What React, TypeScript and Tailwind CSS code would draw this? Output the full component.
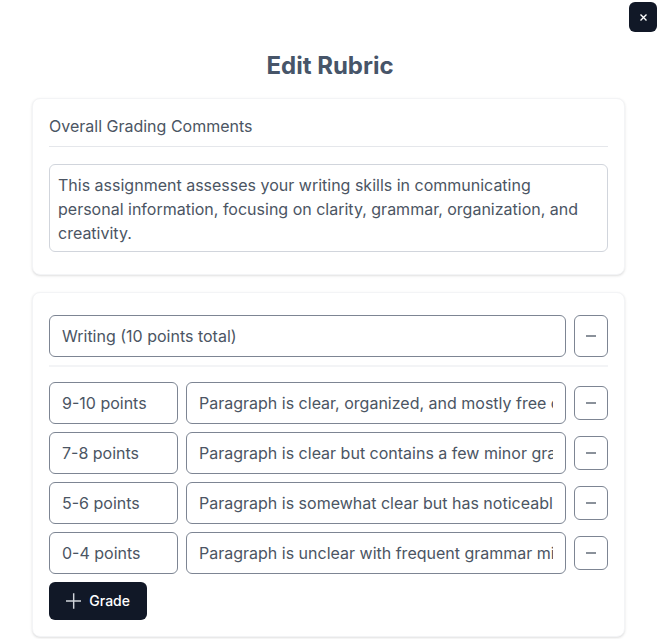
import React from "react";

const rows = [
  { points: "9-10 points", text: "Paragraph is clear, organized, and mostly free of grammar and spelling errors." },
  { points: "7-8 points", text: "Paragraph is clear but contains a few minor grammar or spelling errors." },
  { points: "5-6 points", text: "Paragraph is somewhat clear but has noticeable grammar or spelling errors." },
  { points: "0-4 points", text: "Paragraph is unclear with frequent grammar mistakes." },
];

function MinusButton({ tall }: { tall?: boolean }) {
  return (
    <button
      className={`flex w-[34px] shrink-0 items-center justify-center rounded-md border border-[#7d8593] bg-white ${
        tall ? "h-[42px]" : "h-[34px]"
      }`}
    >
      <svg width="10" height="2" viewBox="0 0 10 2" aria-hidden="true">
        <line x1="0" y1="1" x2="10" y2="1" stroke="#4b5563" strokeWidth="1.3" />
      </svg>
    </button>
  );
}

export default function App() {
  return (
    <div
      className="relative h-[639px] w-[660px] overflow-hidden bg-white text-[#4b5563]"
      style={{ fontFamily: "Inter, 'Noto Sans', sans-serif" }}
    >
      <button className="absolute right-[3px] top-[2px] flex h-[30px] w-7 items-center justify-center rounded-md bg-[#111827]">
        <svg width="7" height="7" viewBox="0 0 7 7" aria-hidden="true">
          <path d="M0.5 0.5L6.5 6.5M6.5 0.5L0.5 6.5" stroke="white" strokeWidth="1.4" />
        </svg>
      </button>

      <h1 className="pt-[50px] text-center text-2xl font-bold leading-8 text-[#475569]">Edit Rubric</h1>

      <div className="ml-[32px] mt-4 w-[593px]">
        <div className="rounded-lg border border-gray-100 bg-white px-4 pb-[22px] pt-[15px] shadow-sm">
          <p className="text-base leading-6 text-[#4b5563]">Overall Grading Comments</p>
          <div className="mt-2 h-px bg-gray-200" />
          <textarea
            className="mt-[17px] block h-[88px] w-full resize-none rounded-md border border-gray-300 px-2 py-2 text-base leading-6 text-[#4b5563] outline-none"
            defaultValue="This assignment assesses your writing skills in communicating personal information, focusing on clarity, grammar, organization, and creativity."
          />
        </div>

        <div className="mt-[17px] rounded-lg border border-gray-100 bg-white px-4 pb-4 pt-[22px] shadow-sm">
          <div className="flex gap-2">
            <input
              className="h-[42px] min-w-0 flex-1 rounded-md border border-[#7d8593] px-3 text-base text-[#4b5563] outline-none"
              defaultValue="Writing (10 points total)"
            />
            <MinusButton tall />
          </div>
          <div className="mt-2 h-[2px] bg-gray-100" />

          <div className="mt-[15px] flex flex-col gap-2">
            {rows.map((row) => (
              <div key={row.points} className="flex items-center gap-2">
                <input
                  className="h-[42px] w-[129px] shrink-0 rounded-md border border-[#7d8593] px-3 text-base text-[#4b5563] outline-none"
                  defaultValue={row.points}
                />
                <input
                  className="h-[42px] min-w-0 flex-1 rounded-md border border-[#7d8593] px-3 text-base text-[#4b5563] outline-none"
                  defaultValue={row.text}
                />
                <MinusButton />
              </div>
            ))}
          </div>

          <button className="mt-2 flex h-[38px] w-[98px] items-center gap-2 rounded-md bg-[#111827] px-[17px] text-sm font-medium text-white">
            <svg width="16" height="16" viewBox="0 0 16 16" aria-hidden="true">
              <path d="M0 8H16M8 0V16" stroke="#d1d5db" strokeWidth="1.5" />
            </svg>
            Grade
          </button>
        </div>
      </div>
    </div>
  );
}
